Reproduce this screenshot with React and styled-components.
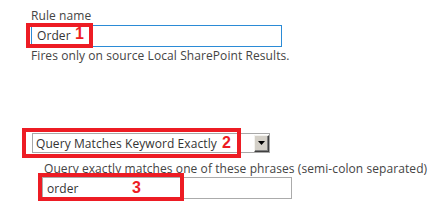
import React from "react"
import styled, { createGlobalStyle } from "styled-components"

const GlobalStyle = createGlobalStyle`
  html, body {
    margin: 0;
    padding: 0;
    background: #ffffff;
  }
  body {
    font-family: "Open Sans", "Noto Sans", sans-serif;
    font-size: 12px;
    letter-spacing: 0.08px;
    color: #444444;
  }
`

const Page = styled.div`
  display: flex;
  flex-direction: column;
  gap: 69px;
  width: 443px;
  height: 211px;
  padding: 8px 0 0 31px;
  box-sizing: border-box;
  overflow: hidden;
`

const Group = styled.div`
  display: flex;
  flex-direction: column;
  gap: ${(p) => p.$gap || 0}px;
  padding-left: ${(p) => p.$indent || 0}px;
`

const Label = styled.div`
  line-height: 16px;
  padding-left: ${(p) => p.$indent || 0}px;
  white-space: nowrap;
`

const Field = styled.div`
  position: relative;
  width: ${(p) => p.$width}px;
`

const TextBox = styled.div`
  box-sizing: border-box;
  width: 100%;
  height: 22px;
  border: 1px solid ${(p) => (p.$focused ? "#2b8bd6" : "#ababab")};
  padding: ${(p) => (p.$focused ? "2px 5px" : "3px 4px")};
  line-height: 16px;
  color: #333333;
  background: #ffffff;
`

const Select = styled.div`
  box-sizing: border-box;
  display: flex;
  align-items: center;
  justify-content: space-between;
  height: 20px;
  border: 1px solid #a8a8a8;
  padding-left: 3px;
  color: #333333;
  background: #ffffff;
`

const SelectText = styled.span`
  line-height: 16px;
  padding-top: 1px;
`

const DropButton = styled.span`
  box-sizing: border-box;
  display: flex;
  align-items: center;
  justify-content: center;
  width: 15px;
  height: 17px;
  background: #d4d0c8;
  border-top: 1px solid #f4f3ef;
  border-left: 1px solid #f4f3ef;
  border-right: 1px solid #404040;
  border-bottom: 1px solid #404040;
  box-shadow: inset -1px -1px 0 #808080;
`

// red annotation frames drawn over the screenshot
const Mark = styled.div`
  position: absolute;
  left: ${(p) => p.$x}px;
  top: ${(p) => p.$y}px;
  width: ${(p) => p.$w}px;
  height: ${(p) => p.$h}px;
  box-sizing: border-box;
  border: 4px solid #ed1c24;
  pointer-events: none;
`

const Num = styled.span`
  position: absolute;
  left: ${(p) => p.$x}px;
  top: ${(p) => p.$y}px;
  font-family: "Liberation Sans", Arial, sans-serif;
  font-weight: bold;
  font-size: 16px;
  line-height: 16px;
  letter-spacing: 0;
  color: #ed1c24;
`

const App = () => {
  return (
    <>
      <GlobalStyle />
      <Page>
        <Group $gap={1}>
          <Label>Rule name</Label>
          <Field $width={251}>
            <TextBox $focused>Order</TextBox>
            <Mark $x={-5} $y={-2} $w={67} $h={25} />
            <Num $x={44} $y={1}>1</Num>
          </Field>
          <Label>Fires only on source Local SharePoint Results.</Label>
        </Group>

        <Group $gap={8} $indent={1}>
          <Field $width={238}>
            <Select>
              <SelectText>Query Matches Keyword Exactly</SelectText>
              <DropButton>
                <svg width="7" height="4" viewBox="0 0 7 4">
                  <path d="M0 0 H7 L3.5 4 Z" fill="#000" />
                </svg>
              </DropButton>
            </Select>
            <Mark $x={-10} $y={-5} $w={219} $h={30} />
            <Num $x={190} $y={2}>2</Num>
          </Field>
          <Group $indent={10}>
            <Label $indent={2}>
              Query exactly matches one of these phrases (semi-colon separated)
            </Label>
            <Field $width={250}>
              <TextBox>order</TextBox>
              <Mark $x={-4} $y={-4} $w={146} $h={28} />
              <Num $x={90} $y={3}>3</Num>
            </Field>
          </Group>
        </Group>
      </Page>
    </>
  )
}

export default App
